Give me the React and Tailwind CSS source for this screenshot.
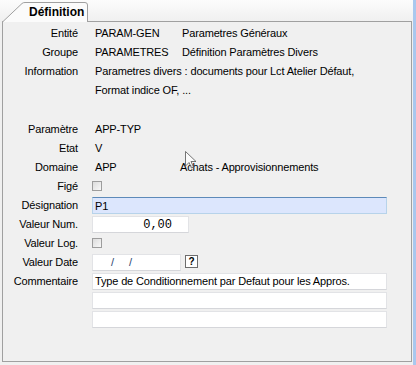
import { useState } from 'react'

const font = { fontFamily: '"Liberation Sans", Arial, sans-serif' }

function Label({ children }) {
  return <div className="text-right pr-[1px] leading-[19px] h-[19px]">{children}</div>
}

function Box({ className = '', children }) {
  return (
    <div className={`h-[17px] border border-[#e2e3e6] border-b-[#d5d6da] bg-white px-[2px] leading-[15px] ${className}`}>
      {children}
    </div>
  )
}

function Check() {
  return <div className="mt-[4px] w-[10px] h-[10px] border border-[#9d9d9d] bg-gradient-to-br from-[#dcdcdc] to-[#f8f8f8]" />
}

export default function App() {
  const [desig, setDesig] = useState('P1')

  return (
    <div className="relative w-[416px] h-[365px] overflow-hidden bg-[#f0f0f0] text-[11px] text-black tracking-[-0.15px]" style={font}>
      <div className="absolute right-0 top-0 w-[3px] h-full bg-[#a9c8ee]" />

      {/* tab strip */}
      <div className="h-[21px] bg-gradient-to-b from-[#fcfcfc] to-[#f0f0f0] pl-[2px] flex items-end">
        <div className="relative w-[88px] h-[19px]">
          <svg className="absolute inset-0" width="88" height="20" viewBox="0 0 88 20">
            <path d="M0.5 20 L20 1.5 Q21 0.5 23 0.5 L83 0.5 Q85.5 0.5 85.5 3 L85.5 20" fill="#fbfbfb" stroke="#a0a0a0" />
          </svg>
          <div className="relative pl-[27px] pt-[2px] font-bold text-[12px] leading-[16px] tracking-normal">Définition</div>
        </div>
      </div>

      {/* panel */}
      <div className="mx-[2px] w-[410px] h-[341px] border border-[#a0a0a0] pt-[2px]">
        <div className="grid grid-cols-[76px_1fr] gap-x-[13px]">
          <Label>Entité</Label>
          <div className="flex leading-[19px]"><span className="w-[90px] pl-[3px]">PARAM-GEN</span><span>Parametres Généraux</span></div>
          <Label>Groupe</Label>
          <div className="flex leading-[19px]"><span className="w-[90px] pl-[3px]">PARAMETRES</span><span>Définition Paramètres Divers</span></div>
          <Label>Information</Label>
          <div className="leading-[19px] pl-[3px]">Parametres divers : documents pour Lct Atelier Défaut,</div>
          <div />
          <div className="leading-[19px] pl-[3px]">Format indice OF, ...</div>
          <div className="h-[20px]" />
          <div />
          <Label>Paramètre</Label>
          <div className="leading-[19px] pl-[3px]">APP-TYP</div>
          <Label>Etat</Label>
          <div className="leading-[19px] pl-[3px]">V</div>
          <Label>Domaine</Label>
          <div className="flex leading-[19px]"><span className="w-[88px] pl-[3px]">APP</span><span>Achats - Approvisionnements</span></div>
          <Label>Figé</Label>
          <div className="h-[19px]"><Check /></div>
          <Label>Désignation</Label>
          <div className="h-[19px] pt-[1px]">
            <input
              value={desig}
              onChange={(e) => setDesig(e.target.value)}
              className="w-[295px] h-[17px] border border-[#b7d3ea] border-t-[#5d8ab9] bg-[#dce6fd] px-[2px] outline-none text-[11px]"
              style={font}
            />
          </div>
          <Label>Valeur Num.</Label>
          <div className="h-[19px] pt-[1px]">
            <Box className="w-[97px] text-right pr-[16px] tracking-normal">
              <span style={{ fontFamily: '"Liberation Mono", "Courier New", monospace' }} className="text-[12px]">0,00</span>
            </Box>
          </div>
          <Label>Valeur Log.</Label>
          <div className="h-[19px]"><Check /></div>
          <Label>Valeur Date</Label>
          <div className="h-[19px] pt-[1px] flex gap-[4px]">
            <Box className="w-[89px] flex gap-[15px] pl-[18px]">
              <span className="text-[#2c3f70]">/</span>
              <span className="text-[#2c3f70]">/</span>
            </Box>
            <div className="mt-[1px] w-[13px] h-[13px] border border-[#6d6d6d] bg-white flex items-center justify-center font-bold text-[10px] leading-none tracking-normal">?</div>
          </div>
          <Label>Commentaire</Label>
          <div className="h-[19px] pt-[1px]"><Box className="w-[295px]">Type de Conditionnement par Defaut pour les Appros.</Box></div>
          <div />
          <div className="h-[19px] pt-[1px]"><Box className="w-[295px]" /></div>
          <div />
          <div className="h-[19px] pt-[1px]"><Box className="w-[295px]" /></div>
        </div>
      </div>

      {/* mouse pointer */}
      <svg className="absolute left-[185px] top-[151px]" width="14" height="20" viewBox="0 0 14 20">
        <path d="M0.5 0.5 L0.5 15 L4 11.5 L6.5 17 L8.5 16 L6 10.5 L11 10.5 Z" fill="#ffffff" fillOpacity="0.7" stroke="#555" strokeOpacity="0.8" />
      </svg>
    </div>
  )
}
